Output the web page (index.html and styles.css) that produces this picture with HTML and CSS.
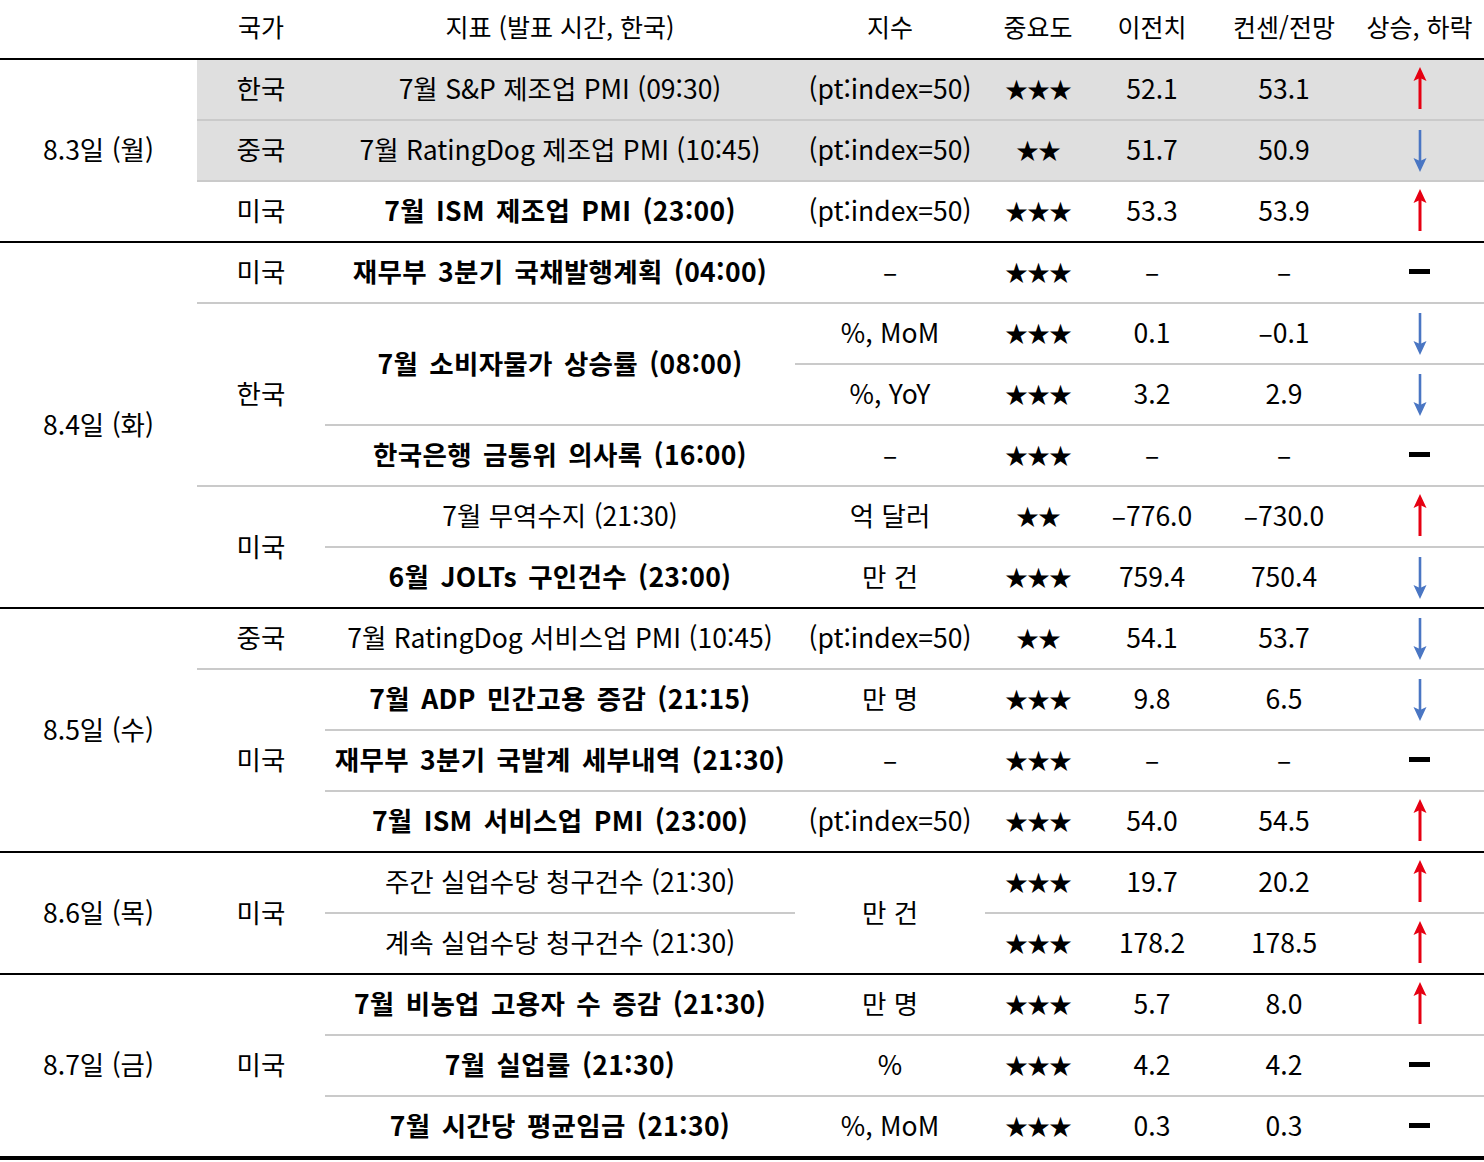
FILE: index.html
```html
<!DOCTYPE html>
<html lang="ko">
<head>
<meta charset="utf-8">
<title>주간 경제지표 일정</title>
<link rel="stylesheet" href="styles.css">
</head>
<body>
<svg width="0" height="0" class="defs">
  <defs>
    <g id="up">
      <line x1="8" y1="9" x2="8" y2="42" stroke="#e60012" stroke-width="3"/>
      <polygon points="8,0 1.5,14 8,11 14.5,14" fill="#e60012"/>
    </g>
    <g id="down">
      <line x1="8" y1="2" x2="8" y2="33" stroke="#4a76c3" stroke-width="2.6"/>
      <polygon points="8,44 1.5,30 8,33 14.5,30" fill="#4a76c3"/>
    </g>
  </defs>
</svg>
<table class="sched">
  <colgroup>
    <col class="c-date"><col class="c-cty"><col class="c-ind"><col class="c-unit"><col class="c-imp"><col class="c-prev"><col class="c-cons"><col class="c-dir">
  </colgroup>
  <thead>
    <tr>
      <th></th><th>국가</th><th>지표 (발표 시간, 한국)</th><th>지수</th><th>중요도</th><th>이전치</th><th>컨센/전망</th><th>상승, 하락</th>
    </tr>
  </thead>
  <tbody>
    <!-- 8.3 -->
    <tr class="shade">
      <td class="date end" rowspan="3">8.3일 (월)</td>
      <td>한국</td><td>7월 S&amp;P 제조업 PMI (09:30)</td><td>(pt:index=50)</td><td class="star">★★★</td><td>52.1</td><td>53.1</td>
      <td><svg class="arr" viewBox="0 0 16 44"><use href="#up"/></svg></td>
    </tr>
    <tr class="shade">
      <td>중국</td><td>7월 RatingDog 제조업 PMI (10:45)</td><td>(pt:index=50)</td><td class="star">★★</td><td>51.7</td><td>50.9</td>
      <td><svg class="arr" viewBox="0 0 16 44"><use href="#down"/></svg></td>
    </tr>
    <tr class="end">
      <td>미국</td><td class="b">7월 ISM 제조업 PMI (23:00)</td><td>(pt:index=50)</td><td class="star">★★★</td><td>53.3</td><td>53.9</td>
      <td><svg class="arr" viewBox="0 0 16 44"><use href="#up"/></svg></td>
    </tr>
    <!-- 8.4 -->
    <tr>
      <td class="date end" rowspan="6">8.4일 (화)</td>
      <td>미국</td><td class="b">재무부 3분기 국채발행계획 (04:00)</td><td>–</td><td class="star">★★★</td><td>–</td><td>–</td>
      <td><span class="dash"></span></td>
    </tr>
    <tr>
      <td rowspan="3">한국</td><td class="b" rowspan="2">7월 소비자물가 상승률 (08:00)</td><td>%, MoM</td><td class="star">★★★</td><td>0.1</td><td>–0.1</td>
      <td><svg class="arr" viewBox="0 0 16 44"><use href="#down"/></svg></td>
    </tr>
    <tr>
      <td>%, YoY</td><td class="star">★★★</td><td>3.2</td><td>2.9</td>
      <td><svg class="arr" viewBox="0 0 16 44"><use href="#down"/></svg></td>
    </tr>
    <tr>
      <td class="b">한국은행 금통위 의사록 (16:00)</td><td>–</td><td class="star">★★★</td><td>–</td><td>–</td>
      <td><span class="dash"></span></td>
    </tr>
    <tr>
      <td rowspan="2" class="end">미국</td><td>7월 무역수지 (21:30)</td><td>억 달러</td><td class="star">★★</td><td>–776.0</td><td>–730.0</td>
      <td><svg class="arr" viewBox="0 0 16 44"><use href="#up"/></svg></td>
    </tr>
    <tr class="end">
      <td class="b">6월 JOLTs 구인건수 (23:00)</td><td>만 건</td><td class="star">★★★</td><td>759.4</td><td>750.4</td>
      <td><svg class="arr" viewBox="0 0 16 44"><use href="#down"/></svg></td>
    </tr>
    <!-- 8.5 -->
    <tr>
      <td class="date end" rowspan="4">8.5일 (수)</td>
      <td>중국</td><td>7월 RatingDog 서비스업 PMI (10:45)</td><td>(pt:index=50)</td><td class="star">★★</td><td>54.1</td><td>53.7</td>
      <td><svg class="arr" viewBox="0 0 16 44"><use href="#down"/></svg></td>
    </tr>
    <tr>
      <td rowspan="3" class="end">미국</td><td class="b">7월 ADP 민간고용 증감 (21:15)</td><td>만 명</td><td class="star">★★★</td><td>9.8</td><td>6.5</td>
      <td><svg class="arr" viewBox="0 0 16 44"><use href="#down"/></svg></td>
    </tr>
    <tr>
      <td class="b">재무부 3분기 국발계 세부내역 (21:30)</td><td>–</td><td class="star">★★★</td><td>–</td><td>–</td>
      <td><span class="dash"></span></td>
    </tr>
    <tr class="end">
      <td class="b">7월 ISM 서비스업 PMI (23:00)</td><td>(pt:index=50)</td><td class="star">★★★</td><td>54.0</td><td>54.5</td>
      <td><svg class="arr" viewBox="0 0 16 44"><use href="#up"/></svg></td>
    </tr>
    <!-- 8.6 -->
    <tr>
      <td class="date end" rowspan="2">8.6일 (목)</td>
      <td rowspan="2" class="end">미국</td><td>주간 실업수당 청구건수 (21:30)</td><td rowspan="2" class="end">만 건</td><td class="star">★★★</td><td>19.7</td><td>20.2</td>
      <td><svg class="arr" viewBox="0 0 16 44"><use href="#up"/></svg></td>
    </tr>
    <tr class="end">
      <td>계속 실업수당 청구건수 (21:30)</td><td class="star">★★★</td><td>178.2</td><td>178.5</td>
      <td><svg class="arr" viewBox="0 0 16 44"><use href="#up"/></svg></td>
    </tr>
    <!-- 8.7 -->
    <tr>
      <td class="date last" rowspan="3">8.7일 (금)</td>
      <td rowspan="3" class="last">미국</td><td class="b">7월 비농업 고용자 수 증감 (21:30)</td><td>만 명</td><td class="star">★★★</td><td>5.7</td><td>8.0</td>
      <td><svg class="arr" viewBox="0 0 16 44"><use href="#up"/></svg></td>
    </tr>
    <tr>
      <td class="b">7월 실업률 (21:30)</td><td>%</td><td class="star">★★★</td><td>4.2</td><td>4.2</td>
      <td><span class="dash"></span></td>
    </tr>
    <tr class="last">
      <td class="b">7월 시간당 평균임금 (21:30)</td><td>%, MoM</td><td class="star">★★★</td><td>0.3</td><td>0.3</td>
      <td><span class="dash"></span></td>
    </tr>
  </tbody>
</table>
</body>
</html>
```

FILE: styles.css
```css
html, body {
  margin: 0;
  padding: 0;
  background: #ffffff;
}

body {
  font-family: "Noto Sans CJK KR", "Noto Sans", sans-serif;
  color: #000000;
}

.defs {
  position: absolute;
  width: 0;
  height: 0;
  overflow: hidden;
}

.sched {
  width: 1484px;
  table-layout: fixed;
  border-collapse: separate;
  border-spacing: 0;
}

.c-date { width: 197px; }
.c-cty { width: 128px; }
.c-ind { width: 470px; }
.c-unit { width: 190px; }
.c-imp { width: 106px; }
.c-prev { width: 122px; }
.c-cons { width: 142px; }
.c-dir { width: 129px; }

.sched th {
  height: 60px;
  padding: 0 0 6px 0;
  box-sizing: border-box;
  font-size: 25px;
  font-weight: 400;
  letter-spacing: 0;
  text-align: center;
  vertical-align: middle;
  border-bottom: 2px solid #000000;
  white-space: nowrap;
}

.sched td {
  height: 57px;
  padding: 0 0 2px 0;
  font-size: 26.5px;
  line-height: 1;
  letter-spacing: 0;
  text-align: center;
  vertical-align: middle;
  border-bottom: 2px solid #cacaca;
  white-space: nowrap;
}

.sched td.b {
  font-weight: 700;
  letter-spacing: 0.3px;
  word-spacing: 3.5px;
}

.sched td.star {
  font-size: 23px;
  letter-spacing: -1px;
}

.sched tr.shade td:not(.date) {
  background: #dfdfdf;
}

.sched tr.end td,
.sched td.end {
  border-bottom-color: #000000;
}

.sched tr.last td,
.sched td.last {
  border-bottom: 4px solid #000000;
}

.arr {
  display: block;
  width: 16px;
  height: 44px;
  margin: 0 auto;
}

.dash {
  display: block;
  width: 21px;
  height: 5px;
  margin: 0 auto;
  background: #000000;
}
```
